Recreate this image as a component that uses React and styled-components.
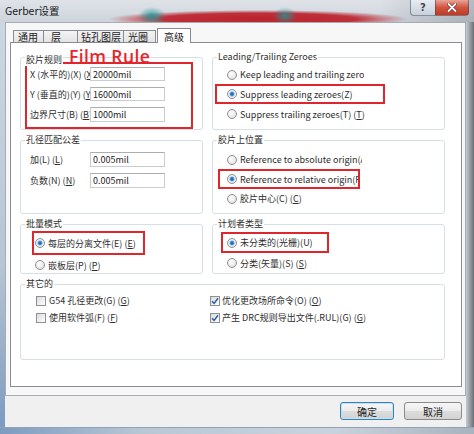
import React from "react";
import styled, { createGlobalStyle, css } from "styled-components";

const FONT = `"Noto Sans CJK SC", "Noto Sans", sans-serif`;

const Global = createGlobalStyle`
  html, body { margin: 0; padding: 0; background: #6b6f73; }
  body { font-family: ${FONT}; }
`;

const Window = styled.div`
  width: 474px;
  height: 434px;
  display: flex;
  flex-direction: column;
  overflow: hidden;
  background: #c4d0dc;
  font-family: ${FONT};
  font-size: 9px;
  color: #2e2e2e;
`;

const TitleBar = styled.div`
  height: 22px;
  flex: none;
  display: flex;
  align-items: flex-start;
  padding: 0 5px;
  box-sizing: border-box;
  background:
    radial-gradient(ellipse 14px 9px at 152px 16px, rgba(30, 150, 150, 0.9), rgba(30, 150, 150, 0)),
    radial-gradient(ellipse 12px 9px at 285px 16px, rgba(30, 150, 150, 0.8), rgba(30, 150, 150, 0)),
    radial-gradient(ellipse 150px 9px at 258px 19px, rgb(188, 34, 44) 0, rgba(188, 34, 44, 0.92) 65%, rgba(188, 34, 44, 0)),
    linear-gradient(to right, rgba(0, 0, 0, 0) 80%, rgba(60, 70, 80, 0.25)),
    linear-gradient(#dfe3e8, #cdd4dc);
`;

const Title = styled.div`
  font-size: 10.5px;
  line-height: 22px;
  color: #1a1a1a;
`;

const CaptionButtons = styled.div`
  margin-left: auto;
  display: flex;
  height: 16px;
`;

const CaptionBtn = styled.div`
  width: ${(p) => p.$w}px;
  height: 16px;
  box-sizing: border-box;
  display: flex;
  align-items: center;
  justify-content: center;
  border: 1px solid rgba(60, 70, 90, 0.55);
  border-top: none;
  font: bold 10px "DejaVu Sans", sans-serif;
  ${(p) =>
    p.$close
      ? css`
          background: linear-gradient(#e9a497, #d0543f 50%, #c23a22);
          border-radius: 0 0 4px 0;
        `
      : css`
          background: linear-gradient(#e8ecf1, #c8d1da);
          color: #3b4a5c;
          border-radius: 0 0 0 4px;
          border-right: none;
        `}
`;

const Middle = styled.div`
  flex: 1;
  display: flex;
  min-height: 0;
`;

const SideFrame = styled.div`
  width: ${(p) => p.$w}px;
  flex: none;
  background: ${(p) => p.$bg};
`;

const BottomFrame = styled.div`
  height: 7px;
  flex: none;
  background: linear-gradient(to right, #7d9bc0, #b9c7d5 30%, #c9d3dd 70%, #a9b3bd);
  border-top: 1px solid #8ea2b8;
  box-sizing: border-box;
`;

const Client = styled.div`
  flex: 1;
  display: flex;
  flex-direction: column;
  background: #f0f0f0;
`;

const Content = styled.div`
  height: 374px;
  flex: none;
  box-sizing: border-box;
  border: 1px solid #a7acb2;
  background: #f7f7f7;
  padding: 5px 3px 8px 4px;
  display: flex;
  flex-direction: column;
`;

const TabStrip = styled.div`
  display: flex;
  align-items: flex-end;
  height: 15px;
  flex: none;
  padding-left: 3px;
  position: relative;
  z-index: 1;
  margin-bottom: -1px;
`;

const Tab = styled.div`
  width: ${(p) => p.$w}px;
  box-sizing: border-box;
  height: ${(p) => (p.$active ? 15 : 13)}px;
  margin-left: ${(p) => p.$ml}px;
  padding-left: ${(p) => p.$pl}px;
  border: 1px solid #898c95;
  border-bottom: ${(p) => (p.$active ? "none" : "1px solid #898c95")};
  background: ${(p) => (p.$active ? "#fff" : "linear-gradient(#f4f4f4, #e3e3e3)")};
  display: flex;
  align-items: center;
  font-size: 10px;
  line-height: 11px;
  color: #222;
  white-space: nowrap;
`;

const Panel = styled.div`
  height: 345px;
  flex: none;
  box-sizing: border-box;
  border: 1px solid #898c95;
  background: #fff;
  padding: 14px 16px 0 9px;
  display: grid;
  grid-template-columns: 183px 233px;
  grid-template-rows: 73px 74px 50px 76px;
  column-gap: 9px;
  row-gap: 10px;
  align-content: start;
`;

const Group = styled.div`
  position: relative;
  border: 1px solid #d5dfe5;
  border-radius: 3px;
  box-sizing: border-box;
  padding: ${(p) => p.$pad || "0"};
  ${(p) => p.$span && "grid-column: 1 / -1;"}
  display: flex;
  flex-direction: column;
  align-items: flex-start;
`;

const GroupLabel = styled.div`
  position: absolute;
  left: 4px;
  top: ${(p) => p.$top ?? -8}px;
  display: flex;
  align-items: baseline;
  white-space: nowrap;
`;

const LabelText = styled.span`
  background: #fff;
  padding: 0 1px;
  line-height: 13px;
  font-size: 9px;
  color: #2e2e2e;
`;

const Annotation = styled.span`
  font-family: "Open Sans", sans-serif;
  font-size: 17.5px;
  font-weight: 600;
  letter-spacing: 0.4px;
  line-height: 16px;
  color: #e7262b;
  margin-left: 6px;
`;

const Mark = styled.div`
  box-sizing: border-box;
  border: 2px solid #e0262d;
  width: ${(p) => p.$w}px;
  height: ${(p) => p.$h}px;
  margin: ${(p) => p.$m || "0"};
  padding: ${(p) => p.$p || "0"};
  display: flex;
  flex-direction: column;
`;

const FieldRow = styled.div`
  display: flex;
  align-items: center;
  height: ${(p) => p.$h}px;
  flex: none;
`;

const Fields = styled.div`
  display: flex;
  flex-direction: column;
  gap: 6px;
`;

const FieldLabel = styled.span`
  width: 60px;
  flex: none;
  overflow: hidden;
  white-space: nowrap;
`;

const Input = styled.input`
  width: 75px;
  height: 100%;
  box-sizing: border-box;
  margin: 0;
  border: 1px solid #c9ccd2;
  border-top-color: #abadb3;
  background: #fff;
  padding: 0 0 0 2px;
  font-family: ${FONT};
  font-size: 9px;
  color: #222;
  outline: none;
`;

const Option = styled.div`
  display: flex;
  align-items: center;
  gap: ${(p) => p.$gap ?? 3}px;
  height: ${(p) => p.$h || 20}px;
  flex: none;
  padding-left: ${(p) => p.$pl || 0}px;
  white-space: nowrap;
  box-sizing: border-box;
`;

const OptText = styled.span`
  overflow: hidden;
  ${(p) => p.$max && `max-width: ${p.$max}px;`}
`;

const Radio = styled.span`
  width: 10px;
  height: 10px;
  flex: none;
  box-sizing: border-box;
  border-radius: 50%;
  border: 1px solid #8e9093;
  background: radial-gradient(circle at 40% 35%, #ffffff, #d9dadc);
  ${(p) =>
    p.$on &&
    css`
      background: radial-gradient(circle, #1f5fa8 0, #3b86d0 1.6px, #a9c8e8 2.4px, #f4f4f4 3.2px, #dedfe1 5px);
    `}
`;

const Check = styled.span`
  width: 10px;
  height: 10px;
  flex: none;
  box-sizing: border-box;
  border: 1px solid #8e9093;
  background: linear-gradient(135deg, #d9dadc, #ffffff);
  display: flex;
  align-items: center;
  justify-content: center;
`;

const U = styled.span`
  text-decoration: underline;
`;

const OtherGrid = styled.div`
  display: grid;
  grid-template-columns: 174px 1fr;
  grid-auto-rows: 17px;
  width: 100%;
`;

const ButtonBar = styled.div`
  flex: 1;
  display: flex;
  justify-content: flex-end;
  align-items: flex-start;
  padding: 6px 4px 0 0;
  gap: 10px;
`;

const Button = styled.button`
  width: ${(p) => p.$w}px;
  height: 18px;
  margin: 0;
  padding: 0;
  border: 1px solid #8a8a8a;
  border-radius: 3px;
  background: linear-gradient(#f6f6f6, #ebebeb 50%, #dddddd 50%, #d2d2d2);
  font-family: ${FONT};
  font-size: 10px;
  color: #222;
  ${(p) =>
    p.$default &&
    css`
      border-color: #3c7fb1;
      box-shadow: inset 0 0 0 1px #bfe2f5;
    `}
`;

const CloseGlyph = () => (
  <svg width="10" height="9" viewBox="0 0 10 9">
    <path d="M1.5 1 L8.5 8 M8.5 1 L1.5 8" stroke="#7a2a1f" strokeWidth="3.2" strokeLinecap="round" />
    <path d="M1.5 1 L8.5 8 M8.5 1 L1.5 8" stroke="#fff" strokeWidth="1.8" strokeLinecap="round" />
  </svg>
);

const CheckMark = () => (
  <svg width="8" height="8" viewBox="0 0 8 8">
    <path d="M1 4.2 L3.1 6.4 L7 1.2" fill="none" stroke="#2a5ea6" strokeWidth="1.5" />
  </svg>
);

const RadioOption = ({ on, children, h, pl, max }) => (
  <Option $h={h} $pl={pl}>
    <Radio $on={on} />
    <OptText $max={max}>{children}</OptText>
  </Option>
);

const CheckOption = ({ on, children, gap }) => (
  <Option $h={17} $gap={gap}>
    <Check>{on && <CheckMark />}</Check>
    <OptText>{children}</OptText>
  </Option>
);

const tabs = [
  { t: "通用", w: 31, ml: 0, pl: 4 },
  { t: "层", w: 35, ml: -1, pl: 7 },
  { t: "钻孔图层", w: 47, ml: -1, pl: 3 },
  { t: "光圈", w: 33, ml: -1, pl: 4 },
  { t: "高级", w: 34, ml: 1, pl: 6, active: true },
];

export default function App() {
  return (
    <>
      <Global />
      <Window>
        <TitleBar>
          <Title>Gerber设置</Title>
          <CaptionButtons>
            <CaptionBtn $w={25}>?</CaptionBtn>
            <CaptionBtn $w={34} $close>
              <CloseGlyph />
            </CaptionBtn>
          </CaptionButtons>
        </TitleBar>
        <Middle>
          <SideFrame $w={5} $bg="linear-gradient(#cdd7e1, #b7c5d4 60%, #7c9bc1)" />
          <Client>
            <Content>
              <TabStrip>
                {tabs.map((tb) => (
                  <Tab key={tb.t} $w={tb.w} $ml={tb.ml} $pl={tb.pl} $active={tb.active}>
                    {tb.t}
                  </Tab>
                ))}
              </TabStrip>
              <Panel>
                <Group>
                  <GroupLabel $top={-10}>
                    <LabelText>胶片规则</LabelText>
                    <Annotation>Film Rule</Annotation>
                  </GroupLabel>
                  <Mark $w={168} $h={68} $m="4px 0 0 4px" $p="3px 0 0 3px">
                    <Fields>
                      <FieldRow $h={14}>
                        <FieldLabel>X (水平的)(X) (<U>X</U>)</FieldLabel>
                        <Input readOnly defaultValue="20000mil" />
                      </FieldRow>
                      <FieldRow $h={14}>
                        <FieldLabel>Y (垂直的)(Y) (<U>Y</U>)</FieldLabel>
                        <Input readOnly defaultValue="16000mil" />
                      </FieldRow>
                      <FieldRow $h={15}>
                        <FieldLabel>边界尺寸(B) (<U>B</U>)</FieldLabel>
                        <Input readOnly defaultValue="1000mil" />
                      </FieldRow>
                    </Fields>
                  </Mark>
                </Group>

                <Group $pad="7px 0 0 0">
                  <GroupLabel>
                    <LabelText>Leading/Trailing Zeroes</LabelText>
                  </GroupLabel>
                  <RadioOption h={19} pl={14}>Keep leading and trailing zero</RadioOption>
                  <Mark $w={170} $h={20} $m="0 0 0 2px" $p="0 0 0 10px">
                    <RadioOption h={16} on>Suppress leading zeroes(Z)</RadioOption>
                  </Mark>
                  <RadioOption h={20} pl={14}>
                    Suppress trailing zeroes(T) (<U>T</U>)
                  </RadioOption>
                </Group>

                <Group $pad="11px 0 0 9px">
                  <GroupLabel>
                    <LabelText>孔径匹配公差</LabelText>
                  </GroupLabel>
                  <Fields>
                    <FieldRow $h={15}>
                      <FieldLabel>加(L) (<U>L</U>)</FieldLabel>
                      <Input readOnly defaultValue="0.005mil" />
                    </FieldRow>
                    <FieldRow $h={15}>
                      <FieldLabel>负数(N) (<U>N</U>)</FieldLabel>
                      <Input readOnly defaultValue="0.005mil" />
                    </FieldRow>
                  </Fields>
                </Group>

                <Group $pad="9px 0 0 0">
                  <GroupLabel>
                    <LabelText>胶片上位置</LabelText>
                  </GroupLabel>
                  <RadioOption h={19} pl={14} max={122}>
                    Reference to absolute origin(A) (A)
                  </RadioOption>
                  <Mark $w={142} $h={20} $m="0 0 0 5px" $p="0 0 0 7px">
                    <RadioOption h={16} on max={119}>
                      Reference to relative origin(R) (R)
                    </RadioOption>
                  </Mark>
                  <RadioOption h={19} pl={14}>
                    胶片中心(C) (<U>C</U>)
                  </RadioOption>
                </Group>

                <Group>
                  <GroupLabel>
                    <LabelText>批量模式</LabelText>
                  </GroupLabel>
                  <Mark $w={113} $h={24} $m="6px 0 0 11px" $p="0 0 0 1px">
                    <RadioOption h={20} on>
                      每层的分离文件(E) (<U>E</U>)
                    </RadioOption>
                  </Mark>
                  <RadioOption h={20} pl={14}>
                    嵌板层(P) (<U>P</U>)
                  </RadioOption>
                </Group>

                <Group>
                  <GroupLabel>
                    <LabelText>计划者类型</LabelText>
                  </GroupLabel>
                  <Mark $w={108} $h={21} $m="7px 0 0 8px" $p="0 0 0 4px">
                    <RadioOption h={17} on>未分类的(光栅)(U)</RadioOption>
                  </Mark>
                  <RadioOption h={20} pl={14}>
                    分类(矢量)(S) (<U>S</U>)
                  </RadioOption>
                </Group>

                <Group $span $pad="7px 0 0 15px">
                  <GroupLabel>
                    <LabelText>其它的</LabelText>
                  </GroupLabel>
                  <OtherGrid>
                    <CheckOption>
                      G54 孔径更改(G) (<U>G</U>)
                    </CheckOption>
                    <CheckOption on gap={2}>
                      优化更改场所命令(O) (<U>O</U>)
                    </CheckOption>
                    <CheckOption>
                      使用软件弧(F) (<U>F</U>)
                    </CheckOption>
                    <CheckOption on gap={2}>
                      产生 DRC规则导出文件(.RUL)(G) (<U>G</U>)
                    </CheckOption>
                  </OtherGrid>
                </Group>
              </Panel>
            </Content>
            <ButtonBar>
              <Button $w={54} $default>
                确定
              </Button>
              <Button $w={58}>取消</Button>
            </ButtonBar>
          </Client>
          <SideFrame $w={8} $bg="linear-gradient(to right, #c3cad1, #6a6f73)" />
        </Middle>
        <BottomFrame />
      </Window>
    </>
  );
}
